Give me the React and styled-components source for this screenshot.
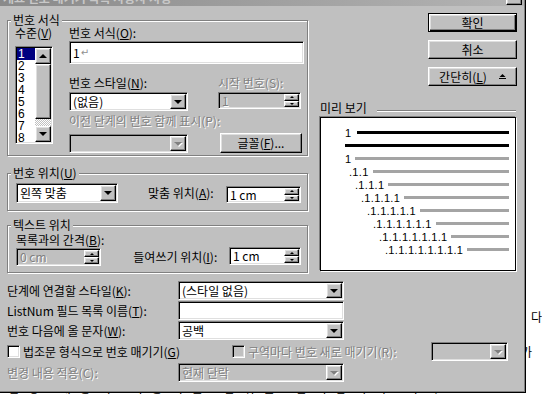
import React from "react";
import styled, { createGlobalStyle, css } from "styled-components";

const GlobalStyle = createGlobalStyle`
  *, *::before, *::after { box-sizing: border-box; }
  html, body { margin: 0; padding: 0; background: #fff; }
  body {
    font-family: "Noto Sans CJK KR", "Liberation Sans", sans-serif;
    font-size: 12px;
    line-height: 14px;
    color: #000;
  }
  u { text-decoration-thickness: 1px; text-underline-offset: 1px; }
`;

// win95 bevels
const sunken = css`
  border: 1px solid;
  border-color: #808080 #fff #fff #808080;
  box-shadow: inset 1px 1px 0 #000, inset -1px -1px 0 #dfdfdf;
`;

const raised = css`
  border: 1px solid;
  border-color: #fff #000 #000 #fff;
  box-shadow: inset -1px -1px 0 #808080, inset 1px 1px 0 #dfdfdf;
  background: #c0c0c0;
`;

const disabledText = css`
  color: #808080;
  text-shadow: 1px 1px 0 #fff;
`;

const Page = styled.div`
  position: relative;
  width: 542px;
  height: 401px;
  overflow: hidden;
  background: #fff;
`;

const Doc = styled.div`
  padding-top: 309px;
  font-size: 12px;
  line-height: 16px;
`;

const DocLine = styled.div`
  padding-left: ${p => p.$x}px;
  margin-top: ${p => p.$mt || 0}px;
  white-space: nowrap;
  letter-spacing: ${p => p.$ls || 0}px;
`;

const Dialog = styled.div`
  position: absolute;
  top: 0;
  left: 0;
  width: 526px;
  height: 393px;
  background: #c0c0c0;
  border-right: 1px solid #000;
  border-bottom: 1px solid #000;
  box-shadow: inset -1px -1px 0 #808080;
`;

const TitleBar = styled.div`
  height: 6px;
  overflow: hidden;
  display: flex;
  margin-right: 1px;
  background: linear-gradient(to right, #8a8a8a, #b4b4b4);
`;

const TitleText = styled.div`
  flex: 1;
  margin-top: -9px;
  padding-left: 3px;
  font-weight: bold;
  color: #c8c8c8;
  white-space: nowrap;
`;

const TitleBtn = styled.div`
  ${raised};
  width: 16px;
  height: 14px;
  margin-top: -9px;
  margin-right: 2px;
`;

const Body = styled.div`
  padding-left: 7px;
`;

const TopSection = styled.div`
  display: flex;
  align-items: flex-start;
`;

const LeftCol = styled.div`
  width: 301px;
  margin-top: 14px;
  display: flex;
  flex-direction: column;
`;

const RightCol = styled.div`
  width: 197px;
  margin-left: 12px;
  margin-top: 7px;
  display: flex;
  flex-direction: column;
`;

const Group = styled.div`
  position: relative;
  height: ${p => p.$h}px;
  margin-top: ${p => p.$mt || 0}px;
  border: 1px solid #808080;
  box-shadow: inset 1px 1px 0 #fff, 1px 1px 0 #fff;
  display: flex;
  align-items: flex-start;
  padding: ${p => p.$pad};
`;

const GroupTitle = styled.span`
  position: absolute;
  top: -8px;
  left: 3px;
  padding: 0 2px;
  background: #c0c0c0;
  white-space: nowrap;
`;

const Col = styled.div`
  display: flex;
  flex-direction: column;
  width: ${p => (p.$w ? `${p.$w}px` : "auto")};
  margin-left: ${p => p.$ml || 0}px;
`;

const Row = styled.div`
  display: flex;
  align-items: flex-start;
  margin-top: ${p => p.$mt || 0}px;
`;

const Label = styled.span`
  display: block;
  white-space: nowrap;
  margin-top: ${p => p.$mt || 0}px;
  margin-left: ${p => p.$ml || 0}px;
  width: ${p => (p.$w ? `${p.$w}px` : "auto")};
  ${p => p.$off && disabledText};
`;

const ListBox = styled.div`
  ${sunken};
  width: 38px;
  height: 98px;
  margin-top: 6px;
  padding: 1px;
  background: #fff;
  display: flex;
`;

const ListItems = styled.div`
  flex: 1;
  overflow: hidden;
  font-family: "Liberation Sans", sans-serif;
`;

const ListItem = styled.div`
  height: 12px;
  line-height: 12px;
  padding-left: 1px;
  ${p => p.$sel && css`
    background: #000080;
    color: #fff;
  `};
`;

const ScrollBar = styled.div`
  width: 16px;
  display: flex;
  flex-direction: column;
`;

const ScrollBtn = styled.div`
  ${raised};
  height: ${p => p.$h || 16}px;
  display: flex;
  align-items: center;
  justify-content: center;
`;

const ScrollTrack = styled.div`
  flex: 1;
  background: repeating-conic-gradient(#c0c0c0 0 25%, #fff 0 50%) 0 0 / 2px 2px;
`;

const Tri = styled.span`
  width: 0;
  height: 0;
  border-left: ${p => p.$w}px solid transparent;
  border-right: ${p => p.$w}px solid transparent;
  ${p =>
    p.$up
      ? css`border-bottom: ${p.$h}px solid ${p.$off ? "#808080" : "#000"};`
      : css`border-top: ${p.$h}px solid ${p.$off ? "#808080" : "#000"};`};
  ${p => p.$off && css`filter: drop-shadow(1px 1px 0 #fff);`};
`;

const TextField = styled.div`
  ${sunken};
  width: ${p => p.$w}px;
  height: ${p => p.$h}px;
  margin-top: ${p => p.$mt || 0}px;
  background: #fff;
  display: flex;
  align-items: center;
  padding-left: 3px;
`;

const ReturnMark = styled.span`
  color: #909090;
  font-size: 10px;
  font-family: "DejaVu Sans", sans-serif;
  margin-left: 1px;
`;

const Combo = styled.div`
  ${sunken};
  width: ${p => p.$w}px;
  height: ${p => p.$h || 19}px;
  margin-top: ${p => p.$mt || 0}px;
  margin-left: ${p => (p.$push ? "auto" : "0")};
  padding: 1px;
  display: flex;
  background: ${p => (p.$off ? "#c0c0c0" : "#fff")};
`;

const FieldValue = styled.span`
  flex: 1;
  display: flex;
  align-items: center;
  padding-left: 2px;
  white-space: nowrap;
  overflow: hidden;
  ${p => p.$off && disabledText};
`;

const DropBtn = styled.div`
  ${raised};
  width: 16px;
  display: flex;
  align-items: center;
  justify-content: center;
`;

const Spin = styled(Combo)``;

const SpinBtns = styled.div`
  width: 15px;
  display: flex;
  flex-direction: column;
`;

const SpinBtn = styled.div`
  ${raised};
  flex: 1;
  display: flex;
  align-items: center;
  justify-content: center;
`;

const Button = styled.div`
  ${raised};
  width: ${p => p.$w}px;
  height: ${p => p.$h || 19}px;
  margin-top: ${p => p.$mt || 0}px;
  margin-left: ${p => p.$ml || 0}px;
  display: flex;
  align-items: center;
  justify-content: center;
  gap: ${p => p.$gap || 0}px;
  white-space: nowrap;
  align-self: ${p => p.$self || "auto"};
  ${p => p.$default && css`
    border-color: #000;
    box-shadow: inset 1px 1px 0 #fff, inset -1px -1px 0 #000,
      inset -2px -2px 0 #808080, inset 2px 2px 0 #dfdfdf;
  `};
`;

const PreviewHead = styled.div`
  display: flex;
  align-items: flex-start;
  margin-top: 15px;
  height: 14px;
`;

const HeadLine = styled.div`
  flex: 1;
  height: 2px;
  margin: 9px 1px 0 10px;
  border-top: 1px solid #808080;
  border-bottom: 1px solid #fff;
`;

const PreviewBox = styled.div`
  width: 196px;
  height: 154px;
  margin-top: 2px;
  background: #fff;
  border: 1px solid #000;
  box-shadow: -1px -1px 0 #808080, 1px 1px 0 #fff;
  padding: 8px 6px 0 0;
`;

const PRow = styled.div`
  height: 13px;
  display: flex;
  align-items: center;
  padding-left: ${p => p.$indent}px;
  font-family: "Liberation Sans", sans-serif;
  font-size: 11px;
  letter-spacing: 0.3px;
`;

const PLine = styled.div`
  flex: 1;
  height: 3px;
  margin-left: ${p => p.$gap}px;
  background: ${p => (p.$dark ? "#000" : "#a4a4a4")};
`;

const BottomSection = styled.div`
  margin-top: 8px;
  display: flex;
  flex-direction: column;
`;

const FormRow = styled.div`
  display: flex;
  align-items: center;
  height: 19px;
  margin-top: ${p => p.$mt || 0}px;
`;

const CheckGroup = styled.div`
  display: flex;
  align-items: center;
  width: ${p => p.$w}px;
`;

const CheckBox = styled.span`
  ${sunken};
  width: 13px;
  height: 13px;
  background: ${p => (p.$off ? "#c0c0c0" : "#fff")};
  margin-right: 3px;
`;

const Arrow = ({ off }) => (
  <DropBtn>
    <Tri $w={4} $h={4} $off={off} />
  </DropBtn>
);

const Spinner = () => (
  <SpinBtns>
    <SpinBtn>
      <Tri $up $w={2} $h={2} />
    </SpinBtn>
    <SpinBtn>
      <Tri $w={2} $h={2} />
    </SpinBtn>
  </SpinBtns>
);

const CollapseIcon = () => (
  <svg width="7" height="7" viewBox="0 0 7 7">
    <path d="M0.5 4 L3.5 1 L6.5 4 Z" fill="#000" />
    <rect x="0" y="5" width="7" height="1" fill="#000" />
  </svg>
);

const previewRows = [
  { indent: 24, text: "1" },
  { indent: 28, text: ".1.1" },
  { indent: 34, text: ".1.1.1" },
  { indent: 40, text: ".1.1.1.1" },
  { indent: 46, text: ".1.1.1.1.1" },
  { indent: 52, text: ".1.1.1.1.1.1" },
  { indent: 58, text: ".1.1.1.1.1.1.1" },
  { indent: 64, text: ".1.1.1.1.1.1.1.1" },
];

export default function App() {
  return (
    <Page>
      <GlobalStyle />
      <Doc>
        <DocLine $x={531}>다</DocLine>
        <DocLine $x={521} $mt={19}>가</DocLine>
        <DocLine $x={8} $mt={20} $ls={9}>변경 내용이 적용되는 범위를 선택합니다 목록</DocLine>
      </Doc>

      <Dialog>
        <TitleBar>
          <TitleText>개요 번호 매기기 목록 사용자 지정</TitleText>
          <TitleBtn />
        </TitleBar>

        <Body>
          <TopSection>
            <LeftCol>
              <Group $h={136} $pad="5px 0 0 7px">
                <GroupTitle>번호 서식</GroupTitle>
                <Col>
                  <Label>
                    수준(<u>V</u>)
                  </Label>
                  <ListBox>
                    <ListItems>
                      {[1, 2, 3, 4, 5, 6, 7, 8, 9].map(n => (
                        <ListItem key={n} $sel={n === 1}>
                          {n}
                        </ListItem>
                      ))}
                    </ListItems>
                    <ScrollBar>
                      <ScrollBtn>
                        <Tri $up $w={4} $h={4} />
                      </ScrollBtn>
                      <ScrollBtn $h={55} />
                      <ScrollTrack />
                      <ScrollBtn>
                        <Tri $w={4} $h={4} />
                      </ScrollBtn>
                    </ScrollBar>
                  </ListBox>
                </Col>

                <Col $w={235} $ml={16}>
                  <Label>
                    번호 서식(<u>O</u>):
                  </Label>
                  <TextField $w={235} $h={23} $mt={1}>
                    1<ReturnMark>↵</ReturnMark>
                  </TextField>
                  <Row $mt={12}>
                    <Col $w={149}>
                      <Label>
                        번호 스타일(<u>N</u>):
                      </Label>
                      <Combo $w={119} $mt={2}>
                        <FieldValue>(없음)</FieldValue>
                        <Arrow />
                      </Combo>
                    </Col>
                    <Col>
                      <Label $off>시작 번호(S):</Label>
                      <Spin $w={83} $h={17} $mt={2} $off>
                        <FieldValue $off>1</FieldValue>
                        <Spinner />
                      </Spin>
                    </Col>
                  </Row>
                  <Label $off $mt={3}>
                    이전 단계의 번호 함께 표시(P):
                  </Label>
                  <Row $mt={5}>
                    <Combo $w={119} $mt={1} $off>
                      <FieldValue />
                      <Arrow off />
                    </Combo>
                    <Button $w={82} $h={20} $ml={32}>
                      글꼴(<u>F</u>)...
                    </Button>
                  </Row>
                </Col>
              </Group>

              <Group $h={38} $mt={17} $pad="9px 6px 0 8px">
                <GroupTitle>
                  번호 위치(<u>U</u>)
                </GroupTitle>
                <Combo $w={102} $h={20}>
                  <FieldValue>왼쪽 맞춤</FieldValue>
                  <Arrow />
                </Combo>
                <Label $ml={30} $mt={3}>
                  맞춤 위치(<u>A</u>):
                </Label>
                <Spin $w={75} $h={17} $mt={3} $push>
                  <FieldValue>1 cm</FieldValue>
                  <Spinner />
                </Spin>
              </Group>

              <Group $h={48} $mt={14} $pad="7px 6px 0 8px">
                <GroupTitle>텍스트 위치</GroupTitle>
                <Col>
                  <Label>
                    목록과의 간격(<u>B</u>):
                  </Label>
                  <Spin $w={85} $h={18} $mt={1} $off>
                    <FieldValue $off>0 cm</FieldValue>
                    <Spinner />
                  </Spin>
                </Col>
                <Label $ml={29} $mt={17}>
                  들여쓰기 위치(<u>I</u>):
                </Label>
                <Spin $w={72} $h={18} $mt={14} $push>
                  <FieldValue>1 cm</FieldValue>
                  <Spinner />
                </Spin>
              </Group>
            </LeftCol>

            <RightCol>
              <Button $w={89} $self="flex-end" $default>
                확인
              </Button>
              <Button $w={89} $mt={8} $self="flex-end">
                취소
              </Button>
              <Button $w={89} $mt={8} $gap={12} $self="flex-end">
                <span>
                  간단히(<u>L</u>)
                </span>
                <CollapseIcon />
              </Button>
              <PreviewHead>
                <Label>미리 보기</Label>
                <HeadLine />
              </PreviewHead>
              <PreviewBox>
                <PRow $indent={24}>
                  1
                  <PLine $dark $gap={6} />
                </PRow>
                <PRow $indent={24}>
                  <PLine $dark $gap={0} />
                </PRow>
                {previewRows.map((r, i) => (
                  <PRow key={i} $indent={r.indent}>
                    {r.text}
                    <PLine $gap={4} />
                  </PRow>
                ))}
              </PreviewBox>
            </RightCol>
          </TopSection>

          <BottomSection>
            <FormRow>
              <Label $w={171}>
                단계에 연결할 스타일(<u>K</u>):
              </Label>
              <Combo $w={166}>
                <FieldValue>(스타일 없음)</FieldValue>
                <Arrow />
              </Combo>
            </FormRow>
            <FormRow $mt={1}>
              <Label $w={171}>
                ListNum 필드 목록 이름(<u>T</u>):
              </Label>
              <TextField $w={166} $h={19} />
            </FormRow>
            <FormRow $mt={1}>
              <Label $w={171}>
                번호 다음에 올 문자(<u>W</u>):
              </Label>
              <Combo $w={166}>
                <FieldValue>공백</FieldValue>
                <Arrow />
              </Combo>
            </FormRow>
            <FormRow $mt={2}>
              <CheckGroup $w={225}>
                <CheckBox />
                <Label>
                  법조문 형식으로 번호 매기기(<u>G</u>)
                </Label>
              </CheckGroup>
              <CheckGroup $w={199}>
                <CheckBox $off />
                <Label $off>구역마다 번호 새로 매기기(R):</Label>
              </CheckGroup>
              <Combo $w={77} $off>
                <FieldValue />
                <Arrow off />
              </Combo>
            </FormRow>
            <FormRow $mt={2}>
              <Label $w={171} $off>
                변경 내용 적용(C):
              </Label>
              <Combo $w={166} $off>
                <FieldValue $off>현재 단락</FieldValue>
                <Arrow off />
              </Combo>
            </FormRow>
          </BottomSection>
        </Body>
      </Dialog>
    </Page>
  );
}
